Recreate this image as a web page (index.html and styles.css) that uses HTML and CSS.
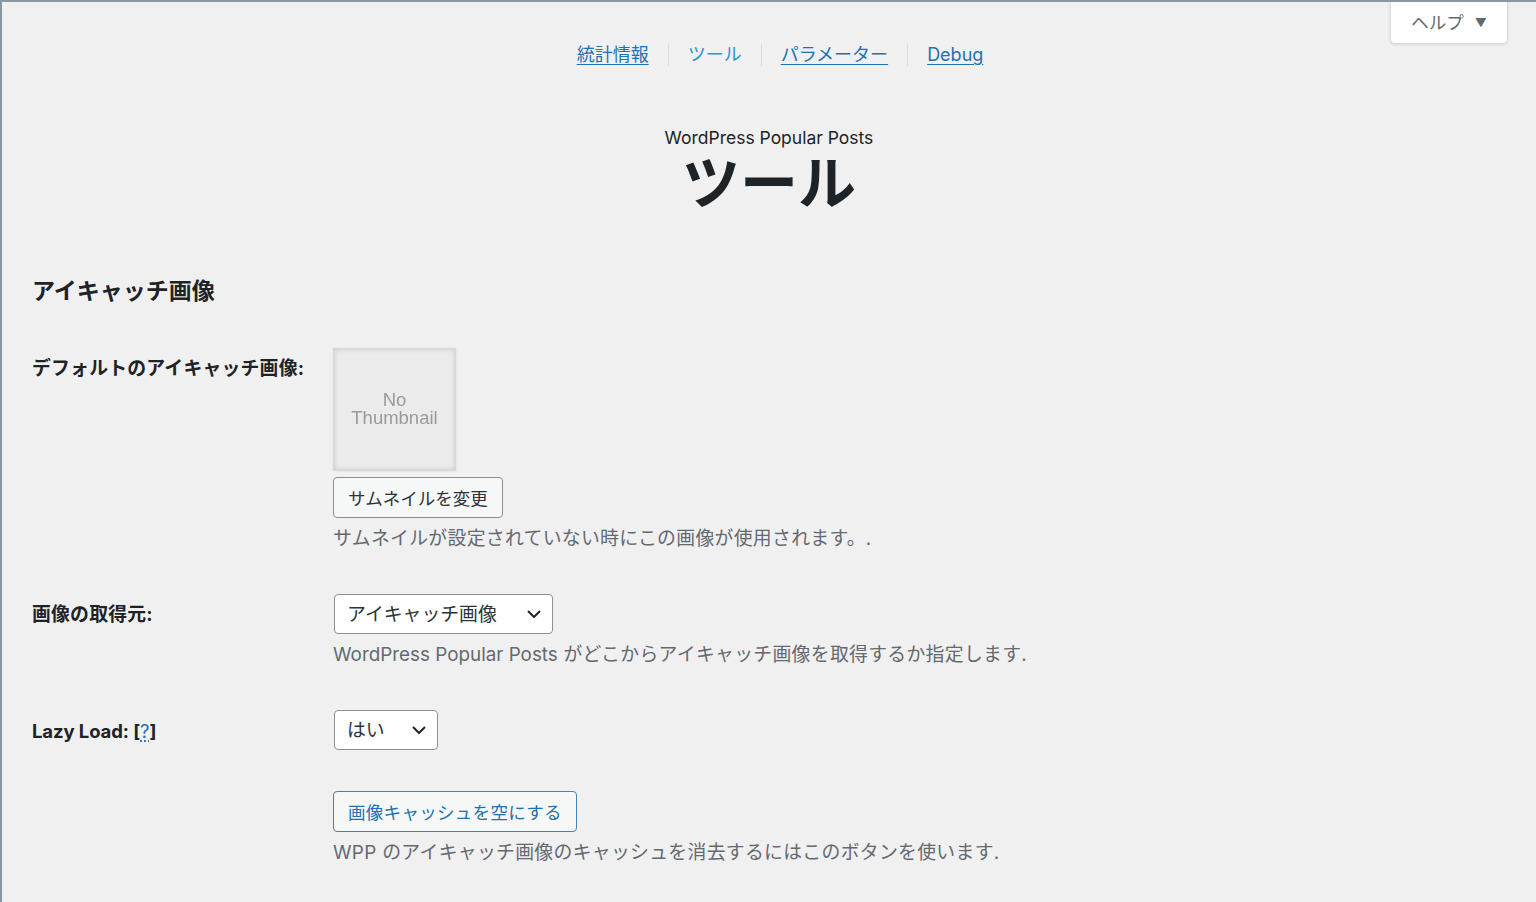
FILE: index.html
```html
<!DOCTYPE html>
<html lang="ja">
<head>
    <meta charset="UTF-8">
    <meta name="viewport" content="width=device-width, initial-scale=1.0">
    <title>ツール ‹ WordPress Popular Posts</title>
    <link rel="stylesheet" href="styles.css">
</head>
<body>
    <div class="wrap">
        <button type="button" class="help-tab">ヘルプ <span class="caret">▼</span></button>

        <nav class="tabs">
            <a href="#">統計情報</a>
            <span class="sep"></span>
            <a href="#" class="current">ツール</a>
            <span class="sep"></span>
            <a href="#">パラメーター</a>
            <span class="sep"></span>
            <a href="#">Debug</a>
        </nav>

        <header class="page-head">
            <p class="plugin-name">WordPress Popular Posts</p>
            <h1>ツール</h1>
        </header>

        <section class="settings">
            <h2>アイキャッチ画像</h2>

            <div class="form-row">
                <div class="label">デフォルトのアイキャッチ画像:</div>
                <div class="field">
                    <div class="thumb"><span>No<br>Thumbnail</span></div>
                    <button type="button" class="btn">サムネイルを変更</button>
                    <p class="desc">サムネイルが設定されていない時にこの画像が使用されます。.</p>
                </div>
            </div>

            <div class="form-row">
                <div class="label">画像の取得元:</div>
                <div class="field">
                    <span class="select select-wide">
                        <select>
                            <option>アイキャッチ画像</option>
                            <option>最初の画像</option>
                            <option>カスタムフィールド</option>
                        </select>
                        <svg class="chevron" viewBox="0 0 14 8" width="14" height="8"><path d="M1 1l6 6 6-6" fill="none" stroke="#1d2327" stroke-width="2"/></svg>
                    </span>
                    <p class="desc"><span class="latin">WordPress Popular Posts</span> がどこからアイキャッチ画像を取得するか指定します.</p>
                </div>
            </div>

            <div class="form-row">
                <div class="label label-latin">Lazy Load: [<a href="#" class="hint">?</a>]</div>
                <div class="field">
                    <span class="select select-small">
                        <select>
                            <option>はい</option>
                            <option>いいえ</option>
                        </select>
                        <svg class="chevron" viewBox="0 0 14 8" width="14" height="8"><path d="M1 1l6 6 6-6" fill="none" stroke="#1d2327" stroke-width="2"/></svg>
                    </span>
                </div>
            </div>

            <div class="form-row">
                <div class="label"></div>
                <div class="field">
                    <button type="button" class="btn btn-blue">画像キャッシュを空にする</button>
                    <p class="desc">WPP のアイキャッチ画像のキャッシュを消去するにはこのボタンを使います.</p>
                </div>
            </div>
        </section>
    </div>
</body>
</html>
```

FILE: styles.css
```css
* {
    margin: 0;
    padding: 0;
    box-sizing: border-box;
}

body {
    font-family: 'Inter', 'Noto Sans CJK JP', sans-serif;
    background: #f0f0f1;
    color: #1d2327;
    min-height: 100vh;
    border-top: 2px solid #87999f;
    border-left: 2px solid #87999f;
}

.wrap {
    position: relative;
    padding-top: 40px;
}

.help-tab {
    position: absolute;
    top: -2px;
    right: 28px;
    width: 118px;
    height: 44px;
    background: #fff;
    border: 1px solid #dcdcde;
    border-top: none;
    border-radius: 0 0 5px 5px;
    box-shadow: 0 1px 3px rgba(0,0,0,0.1);
    font-family: inherit;
    font-size: 17.5px;
    color: #646970;
    cursor: pointer;
}

.help-tab .caret {
    font-size: 12px;
    margin-left: 6px;
    vertical-align: 2px;
}

.tabs {
    display: flex;
    justify-content: center;
    align-items: center;
    padding-left: 22px;
    height: 26px;
    gap: 19px;
}

.tabs a {
    font-size: 18px;
    line-height: 26px;
    color: #2271b1;
    text-decoration: underline;
    text-underline-offset: 3px;
}

.tabs a.current {
    color: #3193cf;
    text-decoration: none;
}

.tabs .sep {
    width: 1px;
    height: 22px;
    background: #dcdcde;
}

.page-head {
    text-align: center;
    margin-top: 58px;
}

.plugin-name {
    font-size: 17.5px;
    line-height: 24px;
    color: #1d2327;
}

h1 {
    font-size: 58px;
    line-height: 58px;
    font-weight: 700;
    margin-top: 4px;
    color: #1d2327;
}

.settings {
    padding-left: 30px;
}

h2 {
    font-size: 23px;
    line-height: 32px;
    font-weight: 700;
    margin-top: 63px;
    margin-bottom: 41px;
}

.form-row {
    display: grid;
    grid-template-columns: 301px 1fr;
    margin-bottom: 41px;
}

.form-row:last-child {
    margin-bottom: 20px;
}

.label {
    font-size: 18.85px;
    line-height: 28px;
    font-weight: 700;
    letter-spacing: 0.2px;
    padding-top: 7px;
}

.label-latin {
    font-size: 18.5px;
    letter-spacing: -0.1px;
}

.hint {
    color: #2271b1;
    text-decoration: underline dotted;
    text-underline-offset: 3px;
    font-weight: 400;
}

.field {
    display: flex;
    flex-direction: column;
    align-items: flex-start;
}

.thumb {
    width: 123px;
    height: 123px;
    background: #ebebeb;
    border: 1px solid #d9d9d9;
    box-shadow: inset 0 0 5px rgba(0,0,0,0.16), 0 0 2px rgba(0,0,0,0.08);
    display: flex;
    align-items: center;
    justify-content: center;
    text-align: center;
    margin-bottom: 6px;
}

.thumb span {
    font-family: 'Liberation Sans', Arial, sans-serif;
    font-size: 18.5px;
    line-height: 18px;
    color: #9a9a9a;
    filter: blur(0.4px);
    margin-top: -2px;
}

.btn {
    height: 41px;
    padding: 0 14px;
    font-family: inherit;
    font-size: 17.5px;
    color: #2c3338;
    background: #f6f7f7;
    border: 1px solid #8c8f94;
    border-radius: 4px;
    cursor: pointer;
}

.btn-blue {
    color: #2271b1;
    border-color: #3f84b8;
    letter-spacing: 0.3px;
}

.desc {
    margin-top: 7px;
    font-size: 18.85px;
    line-height: 28px;
    letter-spacing: 0.3px;
    color: #646970;
}

.desc .latin {
    letter-spacing: 0;
}

.select {
    position: relative;
    display: inline-block;
    margin-left: 1px;
}

.select select {
    appearance: none;
    -webkit-appearance: none;
    height: 40px;
    padding: 0 12px;
    font-family: inherit;
    font-size: 18.85px;
    color: #2c3338;
    background: #fff;
    border: 1px solid #8c8f94;
    border-radius: 4px;
}

.select-wide select {
    width: 219px;
}

.select-small select {
    width: 104px;
}

.chevron {
    position: absolute;
    right: 12px;
    top: 16px;
    pointer-events: none;
}
```
